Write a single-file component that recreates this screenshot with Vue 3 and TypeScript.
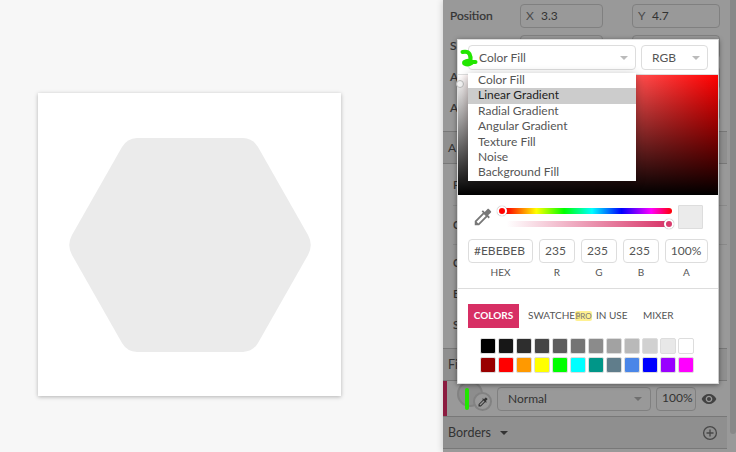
<script setup lang="ts">
const props = [
  { label: 'Position', a: 'X', av: '3.3', b: 'Y', bv: '4.7' },
  { label: 'S', a: '', av: '', b: '', bv: '' },
  { label: 'A', a: '', av: '', b: '', bv: '' },
  { label: 'A', a: '', av: '', b: '', bv: '' },
]
const details = [
  { label: 'P', cls: 'lined tall' },
  { label: 'C', cls: 'lined' },
  { label: 'C', cls: 'mid' },
  { label: 'B', cls: 'low' },
  { label: 'S', cls: 'low' },
]
const fills = ['Color Fill', 'Linear Gradient', 'Radial Gradient', 'Angular Gradient', 'Texture Fill', 'Noise', 'Background Fill']
const channels = [
  { name: 'HEX', value: '#EBEBEB', cls: 'hex' },
  { name: 'R', value: '235', cls: 'num' },
  { name: 'G', value: '235', cls: 'num' },
  { name: 'B', value: '235', cls: 'num' },
  { name: 'A', value: '100%', cls: 'alpha-in' },
]
const swatches = [
  '#000000', '#171717', '#2e2e2e', '#464646', '#5d5d5d', '#747474', '#8b8b8b', '#a2a2a2', '#b9b9b9', '#d1d1d1', '#e8e8e8', '#ffffff',
  '#990000', '#ff0000', '#ff9900', '#ffff00', '#00ff00', '#00ffff', '#009688', '#607d8b', '#4a86e8', '#0000ff', '#9900ff', '#ff00ff',
]
const dropper = 'M20.71 5.63l-2.34-2.34c-.39-.39-1.02-.39-1.41 0l-3.12 3.12-1.93-1.91-1.41 1.41 1.42 1.42L3 16.25V21h4.75l8.92-8.92 1.42 1.42 1.41-1.41-1.92-1.92 3.12-3.12c.4-.4.4-1.03.01-1.42zM6.92 19L5 17.08l8.06-8.06 1.92 1.92L6.92 19z'
</script>

<template>
  <div class="app">
    <main class="canvas">
      <div class="artboard">
        <svg class="hexagon" width="242" height="214" viewBox="0 0 242 214">
          <path fill="#ebebeb" d="M68 0H174Q184 0.500 189 9L239 97Q244.500 107 239 117L189 205Q184 213.500 174 214H68Q58 213.500 53 205L3 117Q-2.500 107 3 97L53 9Q58 0.500 68 0Z" />
        </svg>
      </div>
    </main>
    <aside class="sidebar">
      <div class="content">
        <div class="transform">
          <div v-for="(p, i) in props" :key="i" class="prop">
            <span class="name">{{ p.label }}</span>
            <div class="field x"><i>{{ p.a }}</i>{{ p.av }}</div>
            <div class="field y"><i>{{ p.b }}</i>{{ p.bv }}</div>
          </div>
        </div>
        <div class="head first">A</div>
        <div class="details">
          <div v-for="(h, i) in details" :key="i" class="detail" :class="h.cls">{{ h.label }}</div>
        </div>
        <div class="head fills">Fi</div>
        <div class="fill-row">
          <div class="fill-thumb">
            <span class="mark-one"></span>
            <span class="pick"><svg width="12" height="12" viewBox="0 0 24 24"><path fill="#333" :d="dropper" /></svg></span>
          </div>
          <div class="blend">Normal<b class="caret"></b></div>
          <div class="opacity">100%</div>
          <svg class="eye" width="16" height="16" viewBox="0 0 24 24"><path fill="#424242" d="M12 4.500C7 4.500 2.730 7.610 1 12c1.730 4.390 6 7.500 11 7.500s9.270-3.110 11-7.500c-1.730-4.390-6-7.500-11-7.500zM12 17c-2.760 0-5-2.240-5-5s2.240-5 5-5 5 2.240 5 5-2.240 5-5 5zm0-8c-1.660 0-3 1.340-3 3s1.340 3 3 3 3-1.340 3-3-1.340-3-3-3z" /></svg>
        </div>
        <div class="head borders">Borders<b class="caret dark"></b>
          <svg class="plus" width="16" height="16" viewBox="0 0 16 16" fill="none" stroke="#484848" stroke-width="1.300"><circle cx="8" cy="8" r="6.400" /><path d="M8 4.500v7M4.500 8h7" /></svg>
        </div>
      </div>
      <div class="scrollbar"></div>
    </aside>

    <section class="popover">
      <div class="selects">
        <div class="select type">Color Fill<b class="caret"></b></div>
        <div class="select mode">RGB<b class="caret"></b></div>
      </div>
      <div class="spectrum"><span class="knob"></span></div>
      <div class="sliders">
        <svg class="drop" width="22" height="22" viewBox="0 0 24 24"><path fill="#777" :d="dropper" /></svg>
        <div class="bars">
          <div class="bar hue"><span class="thumb red"></span></div>
          <div class="bar alpha"><span class="thumb pink"></span></div>
        </div>
        <div class="current"></div>
      </div>
      <div class="channels">
        <div v-for="c in channels" :key="c.name" class="channel" :class="c.cls">
          <div class="value">{{ c.value }}</div>
          <span>{{ c.name }}</span>
        </div>
      </div>
      <div class="library">
        <nav class="tabs">
          <span class="tab active">COLORS</span>
          <span class="tab sw">SWATCHES<em>PRO</em></span>
          <span class="tab use">IN USE</span>
          <span class="tab">MIXER</span>
        </nav>
        <div class="swatches">
          <span v-for="s in swatches" :key="s" :style="{ background: s }"></span>
        </div>
      </div>
      <ul class="menu">
        <li v-for="f in fills" :key="f" :class="{ on: f === 'Linear Gradient' }">{{ f }}</li>
      </ul>
      <svg class="mark-two" width="20" height="20" viewBox="0 0 20 20" fill="none" stroke="#22e600" stroke-linecap="round" stroke-linejoin="round">
        <path stroke-width="4" d="M3.500 4Q9 3 10.500 6Q12 9 11.500 12" />
        <path stroke-width="5.500" d="M6 14.500Q9 12.500 12 14.500Q9 16.500 6 15" />
        <path stroke-width="4" d="M11 14L16.500 14" />
      </svg>
    </section>
  </div>
</template>

<style>
body { margin: 0; overflow: hidden; }
</style>

<style scoped>
* { box-sizing: border-box; }
.app { position: relative; display: flex; width: 736px; height: 452px; overflow: hidden; background: #f7f7f7; font: 12px/16px Lato, "Liberation Sans", sans-serif; color: #333; }
.canvas { width: 443px; padding: 93px 0 0 38px; }
.artboard { display: flex; width: 303px; height: 303px; padding: 44.500px 0 0 31px; background: #fff; box-shadow: 0 1px 4px rgba(0, 0, 0, .28); }
.hexagon { display: block; }
.sidebar { display: flex; width: 293px; background: #999; box-shadow: 0 0 7px rgba(0, 0, 0, .2); }
.content { width: 284px; }
.transform { height: 131px; }
.prop { display: flex; align-items: center; height: 31px; padding-left: 7px; }
.prop + .prop .name { padding-bottom: 2px; }
.name { width: 70px; -webkit-text-stroke: .2px; }
.field { display: flex; align-items: center; height: 24px; border: 1px solid #808080; border-radius: 4px; padding-left: 5px; }
.field i { width: 15px; font-style: normal; color: #4a4a4a; }
.x { width: 83px; margin-right: 29px; }
.y { width: 88px; }
.y i { width: 14px; }
.head { display: flex; align-items: center; height: 33px; padding-left: 5px; background: #8f8f8f; border-top: 1px solid #787878; border-bottom: 1px solid #787878; }
.fills { font-size: 12.500px; }
.details { height: 184px; padding-left: 10px; -webkit-text-stroke: .2px; }
.detail { display: flex; align-items: center; }
.lined { height: 39px; border-bottom: 1px solid #8a8a8a; }
.tall { height: 42px; }
.mid { height: 35px; }
.low { height: 31px; padding-bottom: 3px; }
.fill-row { display: flex; align-items: center; height: 35px; border-left: 4px solid #8b1c40; padding-left: 10px; }
.fill-thumb { position: relative; width: 26px; height: 26px; margin-top: -9px; border: 2px solid #828282; border-radius: 50%; background: #8d8d8d; }
.mark-one { position: absolute; left: 6px; top: 5px; width: 4px; height: 22px; border-radius: 2px; background: #22e600; }
.pick { position: absolute; left: 14px; top: 9px; display: flex; align-items: center; justify-content: center; width: 19px; height: 19px; border: 2px solid #828282; border-radius: 50%; background: #999; }
.blend, .opacity { display: flex; align-items: center; height: 24px; border: 1px solid #808080; border-radius: 4px; }
.blend { width: 154px; margin-left: 14px; padding: 0 8px 0 10px; }
.opacity { width: 40px; margin-left: 5px; padding-left: 5px; padding-bottom: 1px; }
.eye { margin-left: 5px; }
.borders { font-size: 12.500px; }
.caret { margin-left: auto; border: 4px solid transparent; border-top-color: #6f6f6f; border-bottom: 0; }
.dark { margin-left: 9px; border-top-color: #333; }
.plus { margin-left: auto; margin-right: 9px; }
.scrollbar { width: 6px; height: 434px; margin-left: auto; background: #888; border-radius: 0 0 3px 3px; }

.popover { position: absolute; left: 457px; top: 39px; width: 262px; height: 345px; background: #fff; border: 1px solid #ddd; border-right-color: #ccc; box-shadow: 0 1px 5px rgba(0, 0, 0, .45); color: #555; }
.selects { display: flex; gap: 5px; height: 35px; padding: 5px 10px; border-bottom: 1px solid #ddd; }
.select { display: flex; align-items: center; height: 25px; border: 1px solid #ddd; border-radius: 4px; padding: 0 7px 0 10px; }
.select .caret { border-top-color: #bbb; }
.type { width: 168px; }
.mode { width: 67px; }
.spectrum { position: relative; height: 120px; background: linear-gradient(to top, #000, transparent), linear-gradient(to right, #fff, #f00); }
.knob { position: absolute; left: -2px; top: 5px; width: 8px; height: 8px; border: 1px solid #bbb; border-radius: 50%; background: #f3f3f3; }
.sliders { display: flex; height: 44px; padding: 10px 0 0 14px; }
.drop { margin-top: 1px; }
.bars { display: grid; gap: 7px; width: 174px; align-content: start; margin: 3px 0 0 4px; }
.bar { position: relative; height: 6px; border-radius: 3px; }
.hue { background: linear-gradient(to right, #f00 5%, #ff0 22%, #0f0 38%, #0ff 54%, #00f 71%, #f0f 88%, #f00); }
.alpha { background: linear-gradient(to right, transparent 5%, #d72f64); }
.thumb { position: absolute; top: -2px; width: 10px; height: 10px; border: 2px solid #fff; border-radius: 50%; box-shadow: 0 0 1px #777; }
.red { left: -1px; background: #f00; }
.pink { right: -2px; background: #d93b6d; }
.current { width: 25px; height: 24px; margin-left: 6px; border: 1px solid #ddd; background: #ebebeb; border-radius: 1px; }
.channels { display: flex; gap: 6px; height: 50px; padding: 0 10px; border-bottom: 1px solid #ddd; }
.channel { display: flex; flex-direction: column; align-items: center; width: 36px; font-size: 10px; line-height: 16px; }
.channel span { margin-top: 1px; }
.value { display: flex; align-items: center; justify-content: center; width: 100%; height: 24px; padding-right: 3px; border: 1px solid #ddd; border-radius: 4px; font-size: 12px; }
.hex { width: 65px; }
.hex .value { padding-right: 2px; }
.alpha-in { width: 43px; }
.alpha-in .value { padding-right: 1px; }
.library { padding: 15px 10px 0; }
.tabs { display: flex; align-items: center; height: 24px; padding-bottom: 2px; font-size: 10px; }
.active { width: 51px; height: 24px; line-height: 22px; margin: 0 9px -2px 0; background: #d72f64; color: #fff; text-align: center; font-weight: 700; }
.sw { position: relative; width: 68px; }
.sw em { position: absolute; left: 47px; top: 4px; width: 17px; height: 10px; border-radius: 2px; background: rgba(255, 235, 100, .7); color: #777; font: 8px/10px Lato, sans-serif; text-align: center; }
.use { width: 47px; }
.swatches { display: grid; grid-template-columns: repeat(12, 16px); gap: 3px 2px; padding: 10px 0 0 12px; }
.swatches span { height: 16px; border: 1px solid #ddd; border-radius: 2px; }
.menu { position: absolute; left: 10px; top: 33px; width: 168px; height: 108px; margin: 0; padding: 0; background: #fff; list-style: none; box-shadow: 0 2px 9px rgba(0, 0, 0, .3); }
.menu li { height: 15.400px; line-height: 13.400px; padding-left: 10px; }
.menu .on { background: #ccc; color: #222; }
.mark-two { position: absolute; left: 1px; top: 8px; }
</style>
